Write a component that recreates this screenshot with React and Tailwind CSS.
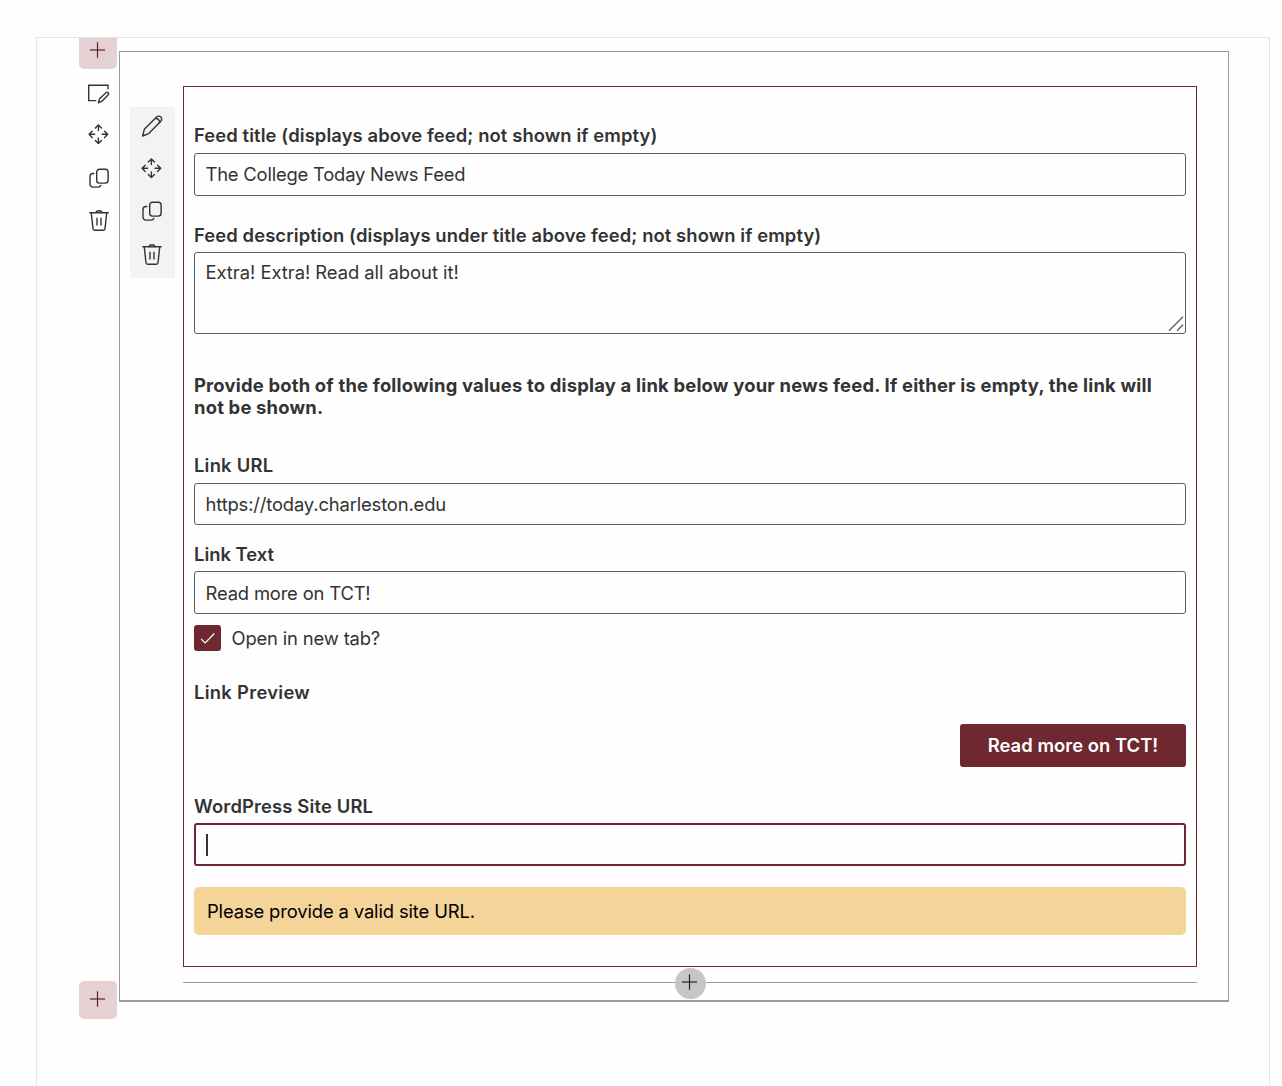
const HINT =
  'Provide both of the following values to display a link below your news feed. If either is empty, the link will not be shown.';

function Icon({ children, className = '' }) {
  return (
    <svg
      width="24"
      height="24"
      viewBox="0 0 24 24"
      fill="none"
      stroke="#333"
      strokeWidth="1.4"
      strokeLinecap="round"
      strokeLinejoin="round"
      className={`shrink-0 ${className}`}
    >
      {children}
    </svg>
  );
}

const EditSection = ({ className }) => (
  <Icon className={className}>
    <path d="M22 7.2V3.2H2.7V18.6H10.3" strokeLinecap="butt" strokeLinejoin="miter" />
    <path d="M12.4 20.8l1.2-4.1 6.3-5.9c.7-.7 1.7-.7 2.3-.1.7.7.6 1.6-.1 2.3l-6.1 6.2z" />
  </Icon>
);

const Pencil = () => (
  <Icon>
    <path d="M2.6 22l1.7-6.7L16.6 3.1c1.2-1.1 3-1.1 4.2 0 1.2 1.1 1.2 2.9 0 4.1L8.7 19.6z" />
    <path d="M15.5 4.3c2.2.3 3.9 1.9 4.2 4.2" />
  </Icon>
);

const Move = ({ className }) => (
  <Icon className={className}>
    <path d="M12.4 8.6V3.1M9.3 6.1L12.4 3 15.5 6.1M12.4 16v5.5M9.3 18.5l3.1 3.1 3.1-3.1M8.7 12.3H3.2M6.2 9.2L3.1 12.3 6.2 15.4M16.1 12.3h5.5M18.6 9.2l3.1 3.1-3.1 3.1" />
  </Icon>
);

const Copy = ({ className }) => (
  <Icon className={className}>
    <rect x="9.7" y="3.2" width="11.4" height="13.9" rx="2.8" />
    <path d="M6.9 7.5H6a3 3 0 0 0-3 3v7.6a3 3 0 0 0 3 3h4.9a3 3 0 0 0 2.9-1.7" />
  </Icon>
);

const Trash = ({ className }) => (
  <Icon className={className}>
    <path d="M2.8 4.8h18.4M9.1 4.7c.2-1.3 1.1-1.9 2.9-1.9s2.7.6 2.9 1.9M4.3 4.9l1.7 15.9c.1 1 .7 1.5 1.6 1.5h8.8c.9 0 1.5-.5 1.6-1.5l1.7-15.9M10 10.3v6.8M14 10.3v6.8" />
  </Icon>
);

const Plus = () => (
  <svg width="16" height="16" viewBox="0 0 16 16" fill="none" stroke="currentColor">
    <path d="M7.5 0.3V15.7" strokeWidth="1.2" />
    <path d="M0 8H15" strokeWidth="1.6" strokeOpacity="0.75" />
  </svg>
);

function Label({ className, children }) {
  return (
    <div className={`h-[22px] text-[18.4px] leading-[22px] font-semibold whitespace-nowrap ${className}`}>
      {children}
    </div>
  );
}

function Field({ className, children }) {
  return (
    <div
      className={`flex items-center rounded-[3px] border border-[#5c5c5c] pl-[10.5px] text-[18.4px] leading-[22px] ${className}`}
    >
      {children}
    </div>
  );
}

export default function App() {
  return (
    <div className="h-[1086px] w-[1282px] overflow-hidden bg-[#fefefe] pt-[37px] pl-[36px] font-['Inter',sans-serif] text-[#333]">
      <div className="flex h-[1049px] w-[1234px] items-start border border-b-0 border-[#e4e4e4] pl-[42px]">
        <aside className="mr-0.5 flex w-[38px] flex-col items-center">
          <button className="flex h-[31px] w-[38px] justify-center rounded-b-[5px] bg-[#e5d0d3] pt-1 text-[#5c2029]">
            <Plus />
          </button>
          <div className="mt-[13px] flex w-[38px] flex-col items-start pl-2">
            <EditSection className="-ml-px" />
            <Move className="-ml-px mt-4" />
            <Copy className="mt-[20px]" />
            <Trash className="mt-[18px]" />
          </div>
          <button className="mt-[749px] flex h-[38px] w-[38px] justify-center rounded-[5px] bg-[#e5d0d3] pt-[10px] text-[#5c2029]">
            <Plus />
          </button>
        </aside>

        <section className="mt-[13px] flex h-[951px] w-[1110px] border border-b-2 border-[#9b9b9b] pl-2.5">
          <div className="mt-[55px] mr-2 flex h-[171px] w-[45px] flex-col items-start bg-[#f3f3f3] pt-[7px] pl-[10px]">
            <Pencil />
            <Move className="-ml-px mt-[18px]" />
            <Copy className="mt-[19px]" />
            <Trash className="mt-[19px]" />
          </div>

          <div className="mt-[34px] w-[1014px]">
            <div className="h-[881px] border border-[#6f2730] px-2.5">
              <Label className="mt-[37px] tracking-[0.1px]">Feed title (displays above feed; not shown if empty)</Label>
              <Field className="mt-[7px] h-[43px] pb-px tracking-[-0.2px]">The College Today News Feed</Field>
              <Label className="mt-[28px] tracking-[0.1px]">
                Feed description (displays under title above feed; not shown if empty)
              </Label>
              <div className="mt-1.5 flex h-[82px] justify-between rounded-[3px] border border-[#5c5c5c] pt-2 pl-[10.5px] text-[18.4px] leading-[22px] tracking-[-0.04px]">
                <span>Extra! Extra! Read all about it!</span>
                <svg
                  width="18"
                  height="18"
                  viewBox="0 0 18 18"
                  stroke="#666"
                  strokeWidth="1.5"
                  className="self-end"
                >
                  <path d="M2 15.7L16 1.7M10 15.7L16 9.7" />
                </svg>
              </div>
              <p className="mt-10 h-[44px] text-[18.4px] leading-[22px] font-bold tracking-[0.2px]">{HINT}</p>
              <Label className="mt-9 tracking-[0.22px]">Link URL</Label>
              <Field className="mt-[7px] h-[42px] pb-px tracking-[-0.15px]">https://today.charleston.edu</Field>
              <Label className="mt-[18px]">Link Text</Label>
              <Field className="mt-1.5 h-[43px] pt-px tracking-[-0.17px]">Read more on TCT!</Field>
              <div className="mt-[11px] flex h-[26px] items-center text-[18.4px] leading-[22px] tracking-[-0.16px]">
                <div className="mr-[10.5px] flex h-[26px] w-[27px] items-center justify-center rounded-[3px] bg-[#6f2730]">
                  <svg width="14" height="12" viewBox="0 0 14 12" fill="none" stroke="#fff" strokeWidth="1.2">
                    <path d="M0 6.8L4.2 11L13.3 1.5" />
                  </svg>
                </div>
                <span>Open in new tab?</span>
              </div>
              <Label className="mt-[30px] tracking-[0.3px]">Link Preview</Label>
              <div className="mt-[21px] flex justify-end">
                <button className="h-[43px] w-[226px] rounded-[3px] bg-[#6f2730] text-[18.4px] font-semibold tracking-[0.04px] text-white">
                  Read more on TCT!
                </button>
              </div>
              <Label className="mt-[28px] tracking-[0.15px]">WordPress Site URL</Label>
              <div className="mt-1.5 flex h-[43px] items-center rounded-[3px] border-2 border-[#6f2730] pl-2.5">
                <div className="h-[22px] w-0.5 bg-[#333]" />
              </div>
              <div className="mt-[21px] flex h-[48px] items-center rounded-[5px] bg-[#f4d499] pl-[13px] text-[18.4px] leading-[22px] tracking-[-0.13px] text-black">
                Please provide a valid site URL.
              </div>
            </div>
            <div className="flex h-[31px] items-center">
              <div className="h-px flex-1 bg-[#9b9b9b]" />
              <button className="mt-px flex h-[31px] w-[31px] items-center justify-center rounded-full bg-[#c6c6c6] pb-0.5 text-[#222]">
                <Plus />
              </button>
              <div className="h-px flex-1 bg-[#9b9b9b]" />
            </div>
          </div>
        </section>
      </div>
    </div>
  );
}
